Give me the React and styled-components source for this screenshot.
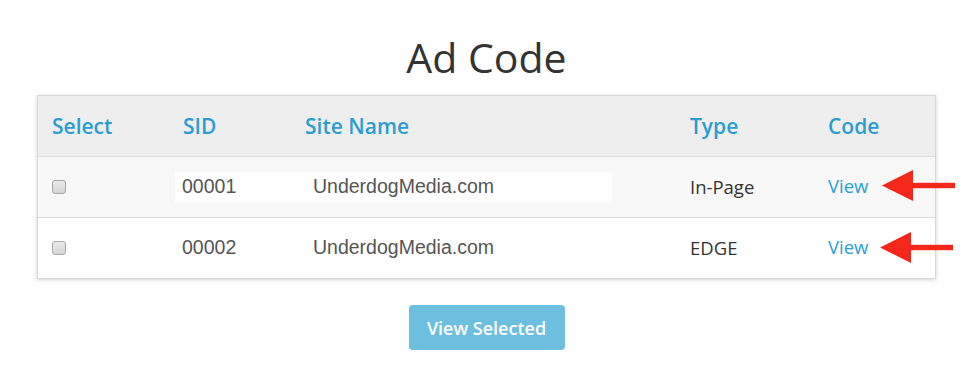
import React from 'react';
import styled, { createGlobalStyle } from 'styled-components';

const Global = createGlobalStyle`
  html, body { margin: 0; padding: 0; background: #fff; }
  body { font-family: "Open Sans", sans-serif; }
`;

const Page = styled.main`
  width: 974px;
  box-sizing: border-box;
  padding: 33px 38px 0 37px;
  display: flex;
  flex-direction: column;
  align-items: center;
`;

const Title = styled.h1`
  margin: 0 0 14px;
  font: 400 41px/48px "Open Sans", sans-serif;
  color: #333;
`;

const Panel = styled.div`
  align-self: stretch;
  box-sizing: border-box;
  border: 1px solid #d8d8d8;
  box-shadow: 0 1px 4px rgba(0, 0, 0, 0.18);
  background: #fff;
`;

const COLS = '131px 122px 385px 138px 1fr';

const HeaderRow = styled.div`
  display: grid;
  grid-template-columns: ${COLS};
  align-items: center;
  height: 60px;
  background: #eeeeee;
`;

const HeadCell = styled.div`
  padding-left: 14px;
  font: 600 21px/1 "Open Sans", sans-serif;
  color: #2b9dd1;
`;

const Row = styled.div`
  position: relative;
  display: grid;
  grid-template-columns: ${COLS};
  align-items: center;
  height: 60px;
  border-top: 1px solid #dcdcdc;
  background: ${(p) => (p.$shaded ? '#f8f8f8' : '#fff')};
`;

const CheckCell = styled.div`
  padding-left: 14px;
  display: flex;
  align-items: center;
`;

const Check = styled.input.attrs({ type: 'checkbox' })`
  appearance: none;
  margin: 0;
  width: 14px;
  height: 14px;
  box-sizing: border-box;
  border: 1px solid #a8a8a8;
  border-radius: 3px;
  background: linear-gradient(#e8e8e8, #d6d6d6);
`;

const SiteBox = styled.div`
  grid-column: 2 / 4;
  display: grid;
  grid-template-columns: 131px 1fr;
  align-items: center;
  margin-left: 6px;
  width: 437px;
  height: 30px;
  background: ${(p) => (p.$highlight ? '#fff' : 'transparent')};
`;

const DataText = styled.div`
  padding-left: 7px;
  font: 400 19.5px/1 "Liberation Sans", Arial, sans-serif;
  color: #555;
`;

const TypeCell = styled.div`
  padding-left: 14px;
  font: 400 18.5px/1 "Open Sans", sans-serif;
  color: #333;
`;

const LinkCell = styled.div`
  padding-left: 14px;
`;

const ViewLink = styled.a`
  font: 400 18.5px/1 "Open Sans", sans-serif;
  color: #2b9fd6;
  text-decoration: none;
`;

const ArrowMark = styled.svg`
  position: absolute;
  left: ${(p) => p.$left}px;
  top: ${(p) => p.$top}px;
  width: 73px;
  height: 31px;
`;

const SelectButton = styled.button`
  margin-top: 26px;
  width: 156px;
  height: 45px;
  border: none;
  border-radius: 4px;
  background: #6cbfdf;
  color: #fff;
  font: 600 18px/1 "Open Sans", sans-serif;
`;

const Arrow = ({ left, top }) => (
  <ArrowMark $left={left} $top={top} viewBox="0 0 73 31">
    <polygon points="0,15.5 31,0 31,31" fill="#f3281b" />
    <rect x="29" y="12.8" width="44" height="5.4" fill="#f3281b" />
  </ArrowMark>
);

const rows = [
  { sid: '00001', site: 'UnderdogMedia.com', type: 'In-Page', shaded: true, arrow: { left: 844, top: 13 } },
  { sid: '00002', site: 'UnderdogMedia.com', type: 'EDGE', shaded: false, arrow: { left: 842, top: 14 } },
];

export default function App() {
  return (
    <>
      <Global />
      <Page>
        <Title>Ad Code</Title>
        <Panel>
          <HeaderRow>
            <HeadCell>Select</HeadCell>
            <HeadCell>SID</HeadCell>
            <HeadCell>Site Name</HeadCell>
            <HeadCell>Type</HeadCell>
            <HeadCell>Code</HeadCell>
          </HeaderRow>
          {rows.map((r) => (
            <Row key={r.sid} $shaded={r.shaded}>
              <CheckCell>
                <Check aria-label={`Select ${r.sid}`} />
              </CheckCell>
              <SiteBox $highlight={r.shaded}>
                <DataText>{r.sid}</DataText>
                <DataText>{r.site}</DataText>
              </SiteBox>
              <TypeCell>{r.type}</TypeCell>
              <LinkCell>
                <ViewLink href="#">View</ViewLink>
              </LinkCell>
              <Arrow left={r.arrow.left} top={r.arrow.top} />
            </Row>
          ))}
        </Panel>
        <SelectButton>View Selected</SelectButton>
      </Page>
    </>
  );
}
